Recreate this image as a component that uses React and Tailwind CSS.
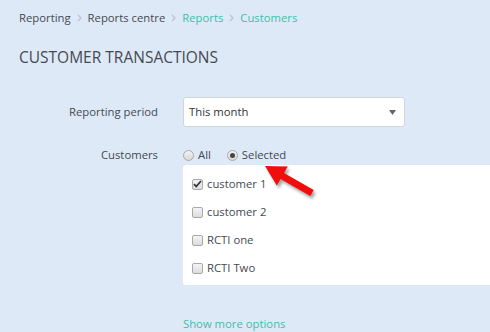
import React, { useState } from "react";

const Chevron = () => (
  <svg width="5" height="8" viewBox="0 0 5 8" className="mx-[6px]">
    <path d="M1 1l3 3-3 3" fill="none" stroke="#b9c2cc" strokeWidth="1.2" />
  </svg>
);

const Checkbox = ({ checked, label, onChange }) => (
  <label className="flex items-center h-[28px] cursor-pointer">
    <span className="w-[11px] h-[11px] rounded-[2px] border border-[#a9a9a9] bg-gradient-to-b from-[#f4f4f4] to-[#dcdcdc] flex items-center justify-center mr-[4px]">
      {checked && (
        <svg width="9" height="8" viewBox="0 0 9 8">
          <path d="M1 4.2l2.2 2.3L8 1" fill="none" stroke="#333" strokeWidth="1.8" />
        </svg>
      )}
    </span>
    <input type="checkbox" className="hidden" checked={checked} onChange={onChange} />
    <span>{label}</span>
  </label>
);

const Radio = ({ checked, label, onClick }) => (
  <button type="button" onClick={onClick} className="flex items-center">
    <span className="w-[11px] h-[11px] rounded-full border border-[#a9a9a9] bg-gradient-to-b from-[#f4f4f4] to-[#d8d8d8] flex items-center justify-center mr-[4px]">
      {checked && <span className="w-[5px] h-[5px] rounded-full bg-[#444]" />}
    </span>
    <span>{label}</span>
  </button>
);

export default function App() {
  const [mode, setMode] = useState("selected");
  const [customers, setCustomers] = useState([
    { name: "customer 1", checked: true },
    { name: "customer 2", checked: false },
    { name: "RCTI one", checked: false },
    { name: "RCTI Two", checked: false },
  ]);

  const toggle = (i) =>
    setCustomers(customers.map((c, j) => (j === i ? { ...c, checked: !c.checked } : c)));

  return (
    <div
      className="relative w-[490px] h-[332px] overflow-hidden bg-[#dee9f8] text-[11.3px] leading-[16px] text-[#444a50]"
      style={{ fontFamily: '"Open Sans", "Liberation Sans", sans-serif' }}
    >
      {/* Breadcrumb */}
      <div className="flex items-center pl-[19px] pt-[9px] h-[26px]">
        <span>Reporting</span>
        <Chevron />
        <span>Reports centre</span>
        <Chevron />
        <span className="text-[#3cc0a6]">Reports</span>
        <Chevron />
        <span className="text-[#3cc0a6]">Customers</span>
      </div>

      {/* Title */}
      <h1 className="pl-[19px] mt-[21px] text-[15.5px] leading-[20px] text-[#454a50]">CUSTOMER TRANSACTIONS</h1>

      {/* Reporting period */}
      <div className="flex items-center mt-[30px]">
        <div className="w-[158px] text-right">Reporting period</div>
        <div className="ml-[25px] w-[222px] h-[30px] bg-white border border-[#cfd6de] rounded-[3px] flex items-center justify-between pl-[5px] pr-[8px] text-[#333]">
          <span>This month</span>
          <svg width="7" height="5" viewBox="0 0 7 5">
            <path d="M0 0h7L3.5 5z" fill="#666" />
          </svg>
        </div>
      </div>

      {/* Customers */}
      <div className="flex items-center mt-[20px] h-[16px]">
        <div className="w-[158px] text-right">Customers</div>
        <div className="ml-[25px] flex items-center gap-[16px]">
          <Radio label="All" checked={mode === "all"} onClick={() => setMode("all")} />
          <Radio label="Selected" checked={mode === "selected"} onClick={() => setMode("selected")} />
        </div>
      </div>

      <div className="ml-[183px] mt-[2px] bg-white rounded-l-[3px] pl-[9px] pt-[5px] h-[120px]">
        {customers.map((c, i) => (
          <Checkbox key={c.name} label={c.name} checked={c.checked} onChange={() => toggle(i)} />
        ))}
      </div>

      <a href="#" className="block ml-[183px] mt-[31px] text-[#3cc0a6]">Show more options</a>

      {/* Annotation arrow */}
      <svg className="absolute inset-0 pointer-events-none" width="490" height="332" viewBox="0 0 490 332">
        <defs>
          <filter id="sh" x="-20%" y="-20%" width="140%" height="140%">
            <feGaussianBlur stdDeviation="1.5" />
          </filter>
        </defs>
        <polygon
          points="267,169 289.8,169.5 286,176 315.7,193 312.3,199 282.6,182 278.8,188.5"
          fill="#000"
          opacity="0.35"
          filter="url(#sh)"
        />
        <polygon
          points="265,166 287.8,166.5 284,173 313.7,190 310.3,196 280.6,179 276.8,185.5"
          fill="#f20d0d"
        />
      </svg>
    </div>
  );
}
